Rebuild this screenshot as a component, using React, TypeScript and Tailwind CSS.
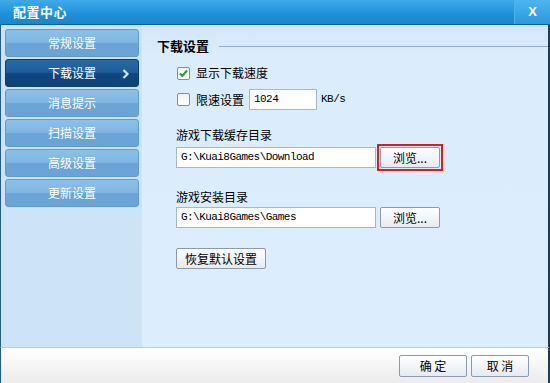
import React from "react";

const cjk = { fontFamily: '"Noto Sans CJK SC", "Noto Sans", sans-serif' };
const mono = { fontFamily: '"Liberation Mono", "Noto Sans CJK SC", monospace' };

function SideBtn({ label, active }: { label: string; active?: boolean }) {
  return (
    <div
      className={
        "relative h-[28px] rounded-[3px] border flex items-center justify-center text-[12px] text-white " +
        (active
          ? "border-[#0d3f70] bg-[linear-gradient(#2a6aa6_0%,#1d5c98_50%,#0e4680_52%,#0c4478_100%)]"
          : "border-[#5e9bd0] bg-[linear-gradient(#8cc0e8_0%,#7fb5e1_50%,#6aa5d8_52%,#6aa4d6_100%)]")
      }
    >
      <span>{label}</span>
      {active && (
        <svg className="absolute right-[8px] top-[9px]" width="8" height="10" viewBox="0 0 8 10">
          <path d="M1.5 1 L5.5 5 L1.5 9" stroke="#cfe8ff" strokeWidth="2.2" fill="none" />
        </svg>
      )}
    </div>
  );
}

function Btn({ label, className = "" }: { label: string; className?: string }) {
  return (
    <div
      className={
        "h-[21px] border border-[#8a9bb0] rounded-[2px] bg-[linear-gradient(#ffffff,#e6ebf0)] flex items-center justify-center text-[12px] text-black " +
        className
      }
    >
      {label}
    </div>
  );
}

function Input({ value, className = "" }: { value: string; className?: string }) {
  return (
    <div
      className={
        "h-[21px] border border-[#a8b8c8] bg-white flex items-center pl-[4px] text-[11px] text-black tracking-[-0.55px] " +
        className
      }
      style={mono}
    >
      {value}
    </div>
  );
}

export default function App() {
  return (
    <div className="w-[550px] h-[383px] flex flex-col overflow-hidden bg-white" style={cjk}>
      {/* Title bar */}
      <div className="h-[25px] flex bg-[linear-gradient(#3eaaea,#1f8fd8_60%,#1886d0)] border-b border-[#0f5f9c]">
        <div className="flex-1 pl-[13px] flex items-center text-white font-bold text-[13px] tracking-[0.5px]">
          配置中心
        </div>
        <div className="w-[36px] border-l border-[#4fb0ea] bg-[linear-gradient(#4fb4ee,#2a98dc)] flex items-center justify-center text-white font-bold text-[13px]" style={{ fontFamily: '"Liberation Sans", sans-serif' }}>
          X
        </div>
      </div>

      {/* Body */}
      <div className="flex-1 flex min-h-0 border-r-2 border-r-[#1a3d5c] border-l border-l-[#2a5a88]">
        <div className="w-[141px] bg-[#cde4f7] pt-[4px] pl-[4px] pr-[3px] flex flex-col gap-[2px]">
          <SideBtn label="常规设置" />
          <SideBtn label="下载设置" active />
          <SideBtn label="消息提示" />
          <SideBtn label="扫描设置" />
          <SideBtn label="高级设置" />
          <SideBtn label="更新设置" />
        </div>
        <div className="flex-1 bg-[linear-gradient(#d3e7fa,#dbedfc_10%,#dcedfc)] pl-[15px] pt-[11px] flex flex-col text-[12px] text-black">
          <div className="flex items-center h-[20px]">
            <span className="font-bold text-[13px]">下载设置</span>
            <div className="ml-[10px] flex-1 h-px bg-[#8fb0cc]" />
          </div>
          <div className="pl-[20px] mt-[10px] flex items-center h-[14px]">
            <div className="w-[13px] h-[13px] border border-[#7c8fa3] bg-[linear-gradient(#eef2f6,#ffffff)] rounded-[2px] flex items-center justify-center">
              <svg width="11" height="11" viewBox="0 0 11 11">
                <path d="M2 5.5 L4.3 8 L9 2.5" stroke="#2f9a2a" strokeWidth="2" fill="none" />
              </svg>
            </div>
            <span className="ml-[6px]">显示下载速度</span>
          </div>
          <div className="pl-[20px] mt-[9px] flex items-center h-[21px]">
            <div className="w-[13px] h-[13px] border border-[#7c8fa3] bg-[linear-gradient(#eef2f6,#ffffff)] rounded-[2px]" />
            <span className="ml-[6px]">限速设置</span>
            <Input value="1024" className="ml-[5px] w-[68px]" />
            <span className="ml-[4px] text-[11px] tracking-[-0.5px]" style={mono}>KB/s</span>
          </div>
          <div className="pl-[19px] mt-[17px] h-[16px] leading-[16px]">游戏下载缓存目录</div>
          <div className="pl-[19px] mt-[1px] flex items-center">
            <Input value="G:\Kuai8Games\Download" className="w-[200px]" />
            <div className="ml-[1px] border-2 border-[#e01a1a] p-[1px]">
              <Btn label="浏览..." className="w-[60px] border-[#3c7fb1]" />
            </div>
          </div>
          <div className="pl-[19px] mt-[18px] h-[16px] leading-[16px]">游戏安装目录</div>
          <div className="pl-[19px] mt-[2px] flex items-center">
            <Input value="G:\Kuai8Games\Games" className="w-[200px]" />
            <Btn label="浏览..." className="ml-[4px] w-[60px]" />
          </div>
          <div className="pl-[19px] mt-[20px] flex">
            <Btn label="恢复默认设置" className="w-[90px]" />
          </div>
        </div>
      </div>

      {/* Footer */}
      <div className="h-[36px] border-t border-[#bccbd9] bg-[linear-gradient(#ffffff,#ececec)] flex items-center justify-end pr-[19px] gap-[4px] border-r-2 border-r-[#1a3d5c] border-l border-l-[#2a5a88]">
        <Btn label="确 定" className="w-[68px] h-[22px]" />
        <Btn label="取 消" className="w-[58px] h-[22px]" />
      </div>
    </div>
  );
}
